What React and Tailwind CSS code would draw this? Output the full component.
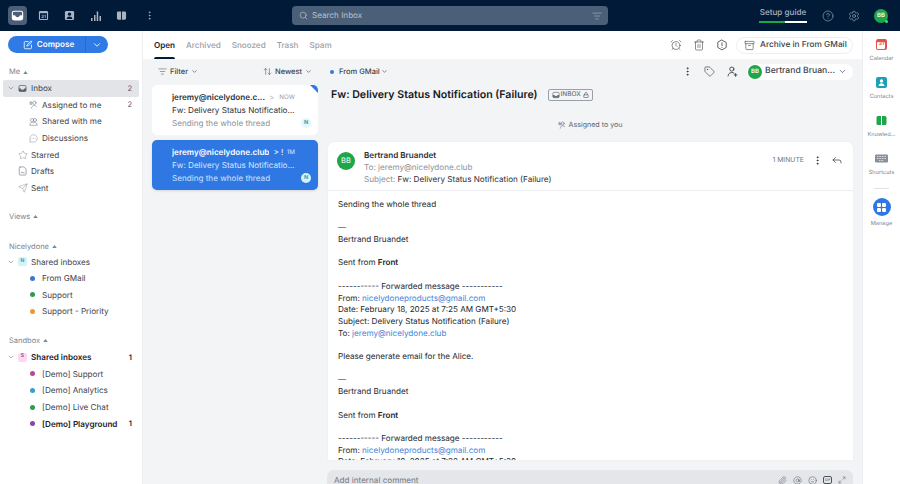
import React from "react";
import {
  ChevronDown, Trash2, Archive, MoreVertical, Tag, Reply,
  Paperclip, AtSign, Smile, Maximize2, Search, CircleHelp, Settings, Star, Send,
  MessageCircleMore, AlarmClock, ArrowUpDown, ListFilter, Lock,
} from "lucide-react";

const F = { fontFamily: "Inter, 'Liberation Sans', sans-serif" };

function InboxGlyph({ className }) {
  return (
    <svg viewBox="0 0 16 16" className={className} fill="currentColor">
      <rect x="1.700" y="2.700" width="12.600" height="10.600" rx="2.200" fill="none" stroke="currentColor" strokeWidth="1.400" />
      <path d="M1.500 7.800H5c.3 1.400 1.500 2.300 3 2.300s2.700-.9 3-2.300h3.500V11a2.500 2.500 0 0 1-2.500 2.500H4A2.500 2.500 0 0 1 1.500 11z" />
    </svg>
  );
}

function PersonStar({ size = 9, className }) {
  return (
    <svg viewBox="0 0 16 16" width={size} height={size} className={className} fill="none" stroke="currentColor" strokeWidth="1.100" strokeLinejoin="round" strokeLinecap="round">
      <circle cx="9.500" cy="5" r="3" />
      <path d="M4.500 14.500c.3-3 2.300-4.800 5-4.800 1.500 0 2.800.6 3.700 1.600" />
      <path d="M3.500 3l.8 1.700 1.800.2-1.300 1.300.3 1.800-1.600-.9-1.600.9.300-1.800L.9 4.900l1.800-.2z" />
    </svg>
  );
}

function PeopleIcon({ size = 9, className }) {
  return (
    <svg viewBox="0 0 16 16" width={size} height={size} className={className} fill="none" stroke="currentColor" strokeWidth="1.100" strokeLinecap="round">
      <circle cx="5.500" cy="5.500" r="3" />
      <circle cx="10.500" cy="5.500" r="3" />
      <path d="M1.500 14c.2-2.800 1.800-4.500 4-4.500 1.100 0 2 .4 2.500 1 .6-.6 1.400-1 2.500-1 2.200 0 3.800 1.700 4 4.500z" />
    </svg>
  );
}

function DraftIcon({ size = 10, className }) {
  return (
    <svg viewBox="0 0 16 16" width={size} height={size} className={className} fill="none" stroke="currentColor" strokeWidth="1.100" strokeLinejoin="round" strokeLinecap="round">
      <path d="M3.500 1.500h6l3.500 3.500v8a1.500 1.500 0 0 1-1.500 1.500h-8A1.500 1.500 0 0 1 2 13V3a1.500 1.500 0 0 1 1.500-1.500z" />
      <path d="M5 11c.7-1.500 1.300-1.500 1.800 0 .4-1 .8-1 1.300 0h2" />
    </svg>
  );
}

function NavIcon({ children, active }) {
  return (
    <div className={`w-[19px] h-[19px] rounded-[4px] flex items-center justify-center ${active ? "bg-[#4b5f78]" : ""}`}>
      {children}
    </div>
  );
}

function SectionLabel({ children, className = "" }) {
  return (
    <div className={`flex items-center gap-[3px] pl-[9px] h-[12px] text-[7.500px] text-[#7d8591] ${className}`}>
      <span>{children}</span>
      <svg viewBox="0 0 6 4" className="w-[5px] h-[3px]" fill="#7d8591"><path d="M3 0l3 4H0z" /></svg>
    </div>
  );
}

function Row({ indent = 0, chevron, icon, label, count, bold, active }) {
  return (
    <div className={`flex items-center h-[16.640px] mx-[3px] pr-[7px] rounded-[2px] text-[8.125px] ${active ? "bg-[#e2e4e8]" : ""} ${bold ? "font-semibold text-[#1c2026]" : "text-[#3d434c]"}`}>
      <div className="w-[15px] flex justify-center shrink-0">
        {chevron && <ChevronDown size={8} className="text-[#5d6570]" strokeWidth={1.5} />}
      </div>
      {indent > 0 && <div className="shrink-0 w-[11px]" />}
      <div className="w-[13px] shrink-0 flex justify-start items-center">{icon}</div>
      <span className="truncate flex-1">{label}</span>
      {count && <span className={`text-[7.500px] ml-[2px] ${bold ? "font-semibold text-[#1c2026]" : "text-[#4d545e]"}`}>{count}</span>}
    </div>
  );
}

function Dot({ color }) {
  return <span className={`block w-[5px] h-[5px] rounded-full ml-[1px] ${color}`} />;
}

function Sidebar() {
  const ic = "text-[#7d8591]";
  return (
    <aside className="w-[143px] shrink-0 bg-white border-r border-[#eceef1] flex flex-col">
      <div className="flex items-center h-[17px] w-[100px] mt-[5px] ml-[8px] rounded-full bg-[#2f7ae5] text-white text-[8.125px] font-semibold">
        <div className="flex-1 flex items-center justify-center gap-[4px] h-full border-r border-[#2a6bc8] pl-[4px]">
          <svg viewBox="0 0 16 16" className="w-[10px] h-[10px]" fill="none" stroke="currentColor" strokeWidth="1.300" strokeLinecap="round" strokeLinejoin="round">
            <path d="M8 2.500H3.500a1.500 1.500 0 0 0-1.500 1.500v8.500a1.500 1.500 0 0 0 1.500 1.500H12a1.500 1.500 0 0 0 1.500-1.500V8" />
            <path d="M13 1.800l1.200 1.200-6.400 6.400-1.700.5.500-1.700z" />
          </svg>
          <span>Compose</span>
        </div>
        <div className="w-[22px] flex justify-center"><ChevronDown size={10} strokeWidth={2.2} /></div>
      </div>
      <SectionLabel className="mt-[13px] mb-[2px]">Me</SectionLabel>
      <Row chevron active icon={<InboxGlyph className="w-[9px] h-[9px] text-[#5a626d]" />} label="Inbox" count="2" />
      <Row indent={1} icon={<PersonStar className={ic} />} label="Assigned to me" count="2" />
      <Row indent={1} icon={<PeopleIcon className={ic} />} label="Shared with me" />
      <Row indent={1} icon={<MessageCircleMore size={9} className={ic} strokeWidth={1.2} />} label="Discussions" />
      <Row icon={<Star size={10} className={ic} strokeWidth={1.1} />} label="Starred" />
      <Row icon={<DraftIcon className={ic} />} label="Drafts" />
      <Row icon={<Send size={10} className={ic} strokeWidth={1.1} />} label="Sent" />
      <SectionLabel className="mt-[14px]">Views</SectionLabel>
      <SectionLabel className="mt-[18px] mb-[1px]">Nicelydone</SectionLabel>
      <Row chevron icon={<span className="flex w-[9px] h-[9px] items-center justify-center rounded-[2px] bg-[#d3f3f8] text-[5px] font-bold text-[#2f9fb8]">N</span>} label="Shared inboxes" />
      <Row indent={1} icon={<Dot color="bg-[#3b76d3]" />} label="From GMail" />
      <Row indent={1} icon={<Dot color="bg-[#2f9a50]" />} label="Support" />
      <Row indent={1} icon={<Dot color="bg-[#e59a32]" />} label="Support - Priority" />
      <SectionLabel className="mt-[15px] mb-[2px]">Sandbox</SectionLabel>
      <Row chevron bold icon={<span className="flex w-[9px] h-[9px] items-center justify-center rounded-[2px] bg-[#f9d9f3] text-[5px] font-bold text-[#c0399f]">S</span>} label="Shared inboxes" count="1" />
      <Row indent={1} icon={<Dot color="bg-[#b84a90]" />} label="[Demo] Support" />
      <Row indent={1} icon={<Dot color="bg-[#3aa0bd]" />} label="[Demo] Analytics" />
      <Row indent={1} icon={<Dot color="bg-[#2f9a50]" />} label="[Demo] Live Chat" />
      <Row indent={1} bold icon={<Dot color="bg-[#8247a8]" />} label="[Demo] Playground" count="1" />
    </aside>
  );
}

function ListCard({ active, time, from, extra, extraClass }) {
  return (
    <div className={`relative ml-[9px] w-[166px] h-[50px] rounded-[5px] overflow-hidden pl-[20px] pr-[23px] pt-[5.500px] text-[8.125px] leading-[13px] ${active ? "bg-[#2f78e4] text-white shadow-sm" : "bg-white text-[#2b3037]"}`}>
      {!active && <div className="absolute right-0 top-0 w-0 h-0 border-t-[8px] border-l-[8px] border-t-[#2f78e4] border-l-transparent" />}
      <div className="flex items-center">
        <span className="font-semibold truncate">{from}</span>
        <span className={`shrink-0 ml-[4px] ${extraClass}`}>{extra}</span>
        <span className={`ml-auto shrink-0 pl-[3px] text-[6.250px] ${active ? "text-[#dbe8fb]" : "text-[#9aa0a9]"}`}>{time}</span>
      </div>
      <div className={`truncate ${active ? "text-[#d6e5fb]" : ""}`}>Fw: Delivery Status Notification (Failure)</div>
      <div className={`truncate ${active ? "text-[#cfe1fa]" : "text-[#8c929b]"}`}>Sending the whole thread</div>
      <span className={`absolute right-[7px] bottom-[7px] w-[10px] h-[10px] rounded-full flex items-center justify-center text-[5.500px] font-bold ${active ? "bg-[#d3f3f8] text-[#2f9fb8]" : "bg-[#e3f7fa] text-[#2f9fb8]"}`}>N</span>
    </div>
  );
}

function ConvList() {
  return (
    <div className="w-[175px] shrink-0 flex flex-col gap-[5px]">
      <div className="flex items-center justify-between h-[25px] -mb-[4px] pl-[15px] pr-[6px] text-[7.500px] font-medium text-[#3d434c]">
        <div className="flex items-center gap-[3px]">
          <ListFilter size={9} strokeWidth={1.3} />
          <span>Filter</span>
          <ChevronDown size={7} />
        </div>
        <div className="flex items-center gap-[3px]">
          <ArrowUpDown size={9} strokeWidth={1.3} />
          <span>Newest</span>
          <ChevronDown size={7} />
        </div>
      </div>
      <ListCard from="jeremy@nicelydone.c..." extra=">" extraClass="text-[#b5bac1]" time="NOW" />
      <ListCard active from="jeremy@nicelydone.club" extra="> !" extraClass="text-white" time="1M" />
    </div>
  );
}

const A = ({ children }) => <span className="text-[#3f83d8]">{children}</span>;

function Body() {
  return (
    <div className="px-[10px] pt-[8px] text-[8.125px] leading-[11.700px] text-[#23272d]">
      <p>Sending the whole thread</p>
      <p className="mt-[11.700px]">—</p>
      <p>Bertrand Bruandet</p>
      <p className="mt-[11.700px]">Sent from <b className="font-semibold">Front</b></p>
      <p className="mt-[11.700px]">----------- Forwarded message -----------</p>
      <p>From: <A>nicelydoneproducts@gmail.com</A></p>
      <p>Date: February 18, 2025 at 7:25 AM GMT+5:30</p>
      <p>Subject: Delivery Status Notification (Failure)</p>
      <p>To: <A>jeremy@nicelydone.club</A></p>
      <p className="mt-[11.700px]">Please generate email for the Alice.</p>
      <p className="mt-[11.700px]">—</p>
      <p>Bertrand Bruandet</p>
      <p className="mt-[11.700px]">Sent from <b className="font-semibold">Front</b></p>
      <p className="mt-[11.700px]">----------- Forwarded message -----------</p>
      <p>From: <A>nicelydoneproducts@gmail.com</A></p>
      <p>Date: February 18, 2025 at 7:22 AM GMT+5:30</p>
    </div>
  );
}

function Conversation() {
  return (
    <div className="flex-1 min-w-0 flex flex-col">
      <div className="flex items-center h-[25px] pl-[12px] pr-[9px] text-[7.500px] font-medium text-[#3d434c]">
        <span className="w-[4px] h-[4px] rounded-full bg-[#3b76d3] mr-[5px]" />
        <span>From GMail</span>
        <ChevronDown size={7} className="ml-[1px]" />
        <div className="ml-auto flex items-center">
          <MoreVertical size={11} strokeWidth={2} className="text-[#2b3037]" />
          <Tag size={11} strokeWidth={1.3} className="ml-[11px] text-[#2b3037]" />
          <svg viewBox="0 0 16 16" className="w-[11px] h-[11px] ml-[12px] text-[#2b3037]" fill="none" stroke="currentColor" strokeWidth="1.200" strokeLinecap="round">
            <circle cx="7" cy="4.500" r="3" />
            <path d="M1.500 14.500c.2-3 2.300-5 5.500-5 1.200 0 2.300.3 3.100.8" />
            <path d="M12.500 11v4M10.500 13h4" />
          </svg>
          <div className="ml-[9px] flex items-center h-[16px] w-[106px] rounded-full bg-white pr-[6px]">
            <span className="w-[14px] h-[14px] rounded-full bg-[#1da64a] text-white text-[6px] font-semibold flex items-center justify-center ml-[1px] shrink-0">BB</span>
            <span className="ml-[3px] text-[8.600px] font-medium truncate flex-1 text-[#3d434c]">Bertrand Bruan...</span>
            <ChevronDown size={9} strokeWidth={1.8} />
          </div>
        </div>
      </div>
      <div className="flex items-center pl-[13px] h-[21px]">
        <h1 className="text-[10.625px] font-semibold text-[#16191e]">Fw: Delivery Status Notification (Failure)</h1>
        <div className="ml-[10px] flex items-center h-[12px] px-[3px] gap-[1px] rounded-[2px] border border-[#9aa0a9] text-[6.500px] font-medium text-[#6d7480]">
          <InboxGlyph className="w-[8px] h-[8px]" />
          <span>INBOX</span>
          <Lock size={6} strokeWidth={3} className="ml-[1px]" />
        </div>
      </div>
      <div className="flex items-center justify-center gap-[3px] mt-[14px] h-[12px] text-[7.100px] text-[#5d6570]">
        <PersonStar size={8} />
        <span>Assigned to you</span>
      </div>
      <div className="flex-1 min-h-0 overflow-hidden mt-[11px] mr-[9px] ml-[10px] bg-white rounded-t-[6px] shadow-[0_0_2px_rgba(0,0,0,0.06)]">
        <div className="flex items-start h-[49px] border-b border-[#eceef1] pl-[9px] pr-[10px] pt-[7px]">
          <span className="mt-[3px] w-[18px] h-[18px] rounded-full bg-[#1da64a] text-white text-[7.500px] flex items-center justify-center shrink-0">BB</span>
          <div className="ml-[9px] text-[8.125px] leading-[12px] text-[#8c929b]">
            <div className="font-semibold text-[#2b3037]">Bertrand Bruandet</div>
            <div>To: jeremy@nicelydone.club</div>
            <div>Subject: <span className="text-[#2b3037]">Fw: Delivery Status Notification (Failure)</span></div>
          </div>
          <div className="ml-auto flex items-center mt-[5px]">
            <span className="text-[6.875px] text-[#6d7480]">1 MINUTE</span>
            <MoreVertical size={11} strokeWidth={2} className="ml-[8px] text-[#2b3037]" />
            <Reply size={12} strokeWidth={1.4} className="ml-[8px] text-[#2b3037]" />
          </div>
        </div>
        <Body />
      </div>
      <div className="h-[14px] mt-[10px] mr-[9px] ml-[9px] bg-[#e4e6ea] rounded-t-[7px] flex items-center pt-[6px] pl-[7px] pr-[7px] text-[8.125px] leading-[12px] text-[#717882] overflow-hidden">
        <span>Add internal comment</span>
        <div className="ml-auto flex items-center gap-[6px] text-[#4d545e]">
          <Paperclip size={9} strokeWidth={1.3} />
          <AtSign size={9} strokeWidth={1.3} />
          <Smile size={9} strokeWidth={1.3} />
          <span className="w-[9px] h-[8px] rounded-[2px] border border-[#4d545e] text-[3.500px] flex items-center justify-center">GIF</span>
          <Maximize2 size={8} strokeWidth={1.3} />
        </div>
      </div>
    </div>
  );
}

function RailItem({ icon, label, className = "" }) {
  return (
    <div className={`flex flex-col items-center gap-[6px] h-[25px] ${className}`}>
      <div className="h-[12px] flex items-center justify-center">{icon}</div>
      <span className="text-[5.625px] text-[#7d8591] leading-[7px]">{label}</span>
    </div>
  );
}

function Rail() {
  return (
    <aside className="w-[38px] shrink-0 bg-white border-l border-[#eceef1] flex flex-col items-center pt-[7px]">
      <RailItem label="Calendar" icon={
        <span className="w-[11px] h-[11px] rounded-[2px] bg-[#e8504a] flex items-end justify-center pb-[1px]">
          <span className="w-[8px] h-[7px] bg-white rounded-[1px] text-[5px] font-bold text-[#e8504a] flex items-center justify-center">31</span>
        </span>} />
      <RailItem className="mt-[13px]" label="Contacts" icon={
        <svg viewBox="0 0 11 11" className="w-[11px] h-[11px]"><rect width="11" height="11" rx="2" fill="#1e9fb8" /><circle cx="5.500" cy="4" r="1.700" fill="#fff" /><path d="M2.500 9c.3-2 1.500-2.800 3-2.800s2.700.8 3 2.800z" fill="#fff" /></svg>} />
      <RailItem className="mt-[13px]" label="Knowled..." icon={
        <svg viewBox="0 0 11 11" className="w-[11px] h-[11px]"><path d="M5 1H2a1.500 1.500 0 0 0-1.500 1.500v6A1.500 1.500 0 0 0 2 10h3zM6 1h3a1.500 1.500 0 0 1 1.500 1.500v6A1.500 1.500 0 0 1 9 10H6z" fill="#1da64a" /></svg>} />
      <RailItem className="mt-[13px]" label="Shortcuts" icon={
        <svg viewBox="0 0 13 11" className="w-[13px] h-[11px]"><rect y="1.500" width="13" height="8" rx="1" fill="#8a9099" /><path d="M2 3.500h9M2 5.500h9M4 7.500h5" stroke="#fff" strokeWidth=".7" strokeDasharray="1 .6" /></svg>} />
      <div className="w-[15px] border-t border-[#dfe2e6] mt-[11px]" />
      <div className="mt-[9px] flex flex-col items-center gap-[5px]">
        <span className="w-[18px] h-[18px] rounded-full bg-[#2f78e4] grid grid-cols-2 gap-[1px] p-[4.500px]">
          <span className="bg-white rounded-[1px]" /><span className="bg-white rounded-[1px]" /><span className="bg-white rounded-[1px]" /><span className="bg-white rounded-[1px]" />
        </span>
        <span className="text-[5.625px] text-[#7d8591] leading-[7px]">Manage</span>
      </div>
    </aside>
  );
}

function Header() {
  const c = "#aab4c2";
  return (
    <header className="h-[31px] shrink-0 bg-[#001a38] flex items-center relative">
      <div className="flex items-center gap-[7px] ml-[8px]">
        <NavIcon active><InboxGlyph className="w-[13px] h-[13px] text-white" /></NavIcon>
        <NavIcon>
          <svg viewBox="0 0 12 12" className="w-[11px] h-[11px]"><rect x="1" y="1" width="10" height="10" rx="1.500" fill={c} /><rect x="2.200" y="3.500" width="7.600" height="6.300" fill="#001a38" /><text x="6" y="9" fontSize="5" fontWeight="700" fill={c} textAnchor="middle">31</text></svg>
        </NavIcon>
        <NavIcon>
          <svg viewBox="0 0 12 12" className="w-[11px] h-[11px]"><rect x="1" y="1" width="10" height="10" rx="1.500" fill={c} /><circle cx="6" cy="4.500" r="1.800" fill="#001a38" /><path d="M2.800 9.800c.3-2 1.600-2.800 3.200-2.800s2.900.8 3.200 2.800z" fill="#001a38" /></svg>
        </NavIcon>
        <NavIcon>
          <svg viewBox="0 0 12 12" className="w-[12px] h-[12px]" fill={c}><rect x="1" y="8" width="1.500" height="3" /><rect x="4" y="5" width="1.500" height="6" /><rect x="6.700" y="1.500" width="1.500" height="9.500" /><rect x="9.500" y="6" width="1.500" height="5" /></svg>
        </NavIcon>
        <NavIcon>
          <svg viewBox="0 0 12 12" className="w-[11px] h-[11px]" fill={c}><path d="M5.500 1.500H2.500A1.500 1.500 0 0 0 1 3v6a1.500 1.500 0 0 0 1.500 1.500h3zM6.500 1.500h3A1.500 1.500 0 0 1 11 3v6a1.500 1.500 0 0 1-1.500 1.500h-3z" /></svg>
        </NavIcon>
        <MoreVertical size={11} color={c} strokeWidth={1.8} className="ml-[6px]" />
      </div>
      <div className="absolute left-[292px] top-[6px] w-[316px] h-[19px] rounded-[4px] bg-[#4b5f78] flex items-center pl-[7px] pr-[6px] text-[#b9c2cf] text-[8.125px]">
        <Search size={9} strokeWidth={1.8} />
        <span className="ml-[4px]">Search Inbox</span>
        <ListFilter size={10} className="ml-auto" strokeWidth={1.3} />
      </div>
      <div className="ml-auto flex items-center mr-[12px]">
        <div className="flex flex-col items-center mr-[15px] -mt-[2px]">
          <span className="text-[8.125px] font-medium text-[#aab4c2] leading-[11px]">Setup guide</span>
          <div className="flex w-[48px] h-[2px] mt-[3px]">
            <span className="w-[26px] bg-[#1da64a]" />
            <span className="flex-1 bg-white" />
          </div>
        </div>
        <CircleHelp size={12} color={c} strokeWidth={1.2} />
        <Settings size={12} color={c} strokeWidth={1.2} className="ml-[14px]" />
        <span className="relative ml-[14px] w-[14px] h-[14px] rounded-full bg-[#1da64a] text-white text-[6px] font-semibold flex items-center justify-center">BB
          <span className="absolute right-0 bottom-0 w-[3px] h-[3px] rounded-full bg-[#3ee07a]" />
        </span>
      </div>
    </header>
  );
}

function TopTabs() {
  return (
    <div className="h-[28px] shrink-0 bg-white flex items-center pl-[11px] pr-[9px]">
      <div className="flex h-full gap-[11px] text-[8.125px] font-medium text-[#9aa0a9]">
        <div className="relative flex items-center pt-[1px] text-[#1b2330] font-semibold">Open
          <span className="absolute left-0 right-0 bottom-0 h-[2px] rounded-t bg-[#001a38]" />
        </div>
        <div className="flex items-center pt-[1px]">Archived</div>
        <div className="flex items-center pt-[1px]">Snoozed</div>
        <div className="flex items-center pt-[1px]">Trash</div>
        <div className="flex items-center pt-[1px]">Spam</div>
      </div>
      <div className="ml-auto flex items-center text-[#3d434c]">
        <AlarmClock size={12} strokeWidth={1.2} />
        <Trash2 size={12} strokeWidth={1.2} className="ml-[11px]" />
        <svg viewBox="0 0 16 16" className="w-[12px] h-[12px] ml-[11px]" fill="none" stroke="currentColor" strokeWidth="1.100" strokeLinecap="round" strokeLinejoin="round">
          <path d="M8 1.500l5.600 3.200v6.600L8 14.500l-5.600-3.200V4.700z" />
          <path d="M8 5v3.800M8 11v.2" />
        </svg>
        <div className="ml-[8px] flex items-center gap-[5px] h-[17px] w-[117px] rounded-full border border-[#eceef1] pl-[7px] text-[8.300px] font-medium">
          <Archive size={11} strokeWidth={1.3} />
          <span>Archive in From GMail</span>
        </div>
      </div>
    </div>
  );
}

export default function App() {
  return (
    <div style={F} className="w-[900px] h-[484px] overflow-hidden flex flex-col bg-white [text-rendering:geometricPrecision]">
      <Header />
      <div className="flex flex-1 min-h-0">
        <Sidebar />
        <div className="flex-1 min-w-0 flex flex-col">
          <TopTabs />
          <div className="flex flex-1 min-h-0 bg-[#f2f4f6]">
            <ConvList />
            <Conversation />
          </div>
        </div>
        <Rail />
      </div>
    </div>
  );
}
